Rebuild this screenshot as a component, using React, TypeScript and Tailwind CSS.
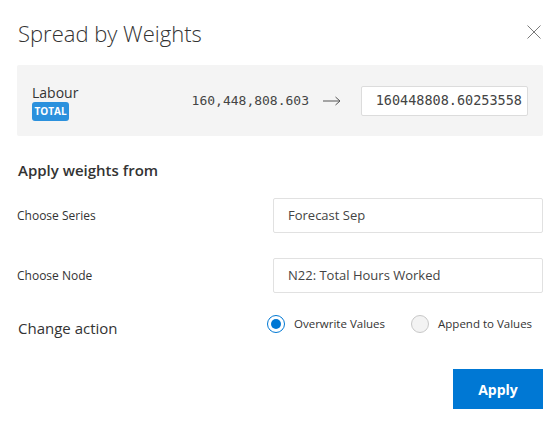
const sans = { fontFamily: '"Open Sans", "Noto Sans", sans-serif' };

const CloseIcon = () => (
  <svg width="14" height="14" viewBox="0 0 14 14" className="text-[#7a7a7a]">
    <path d="M0.5 0.5 L13.5 13.5 M13.5 0.5 L0.5 13.5" stroke="currentColor" strokeWidth="1" fill="none" />
  </svg>
);

const LongArrow = () => (
  <svg width="18" height="10" viewBox="0 0 18 10" className="text-[#555]">
    <path d="M0 5 H17 M12.5 1 L17 5 L12.5 9" stroke="currentColor" strokeWidth="1" fill="none" />
  </svg>
);

const Radio = ({ checked, label }: { checked?: boolean; label: string }) => (
  <label className="flex items-center gap-[9px] whitespace-nowrap text-[11.5px] text-[#333]">
    {checked ? (
      <span className="flex h-[18px] w-[18px] shrink-0 items-center justify-center rounded-full border border-[#0078d4] bg-white">
        <span className="h-[10px] w-[10px] rounded-full bg-[#0078d4]" />
      </span>
    ) : (
      <span className="h-[18px] w-[18px] shrink-0 rounded-full border border-[#c8c8c8] bg-[#f3f3f3]" />
    )}
    {label}
  </label>
);

const Field = ({ label, value }: { label: string; value: string }) => (
  <div className="flex items-center">
    <div className="text-[12px] text-[#333]">{label}</div>
    <div className="ml-auto flex h-[35px] w-[270px] items-center rounded-[2px] border border-[#e1e1e1] bg-white px-[14px] text-[13px] text-[#444]">
      {value}
    </div>
  </div>
);

export default function App() {
  return (
    <div className="h-[425px] w-[560px] bg-white px-[17px]" style={sans}>
      {/* header */}
      <div className="flex h-[65px] items-start justify-between">
        <h1 className="mt-[18px] pl-[1px] text-[22px] font-light leading-[30px] text-[#333]">Spread by Weights</h1>
        <button className="mr-[2px] mt-[25px]">
          <CloseIcon />
        </button>
      </div>

      {/* total panel */}
      <div className="flex h-[71px] items-center rounded-[2px] bg-[#f4f4f4] pl-[15px] pr-[15px]">
        <div className="mt-[4px] flex flex-col items-start">
          <span className="text-[14px] leading-[17px] text-[#333]">Labour</span>
          <span className="mt-[1px] flex h-[19px] w-[37px] items-center justify-center rounded-[3px] bg-[#2b91dd] text-[10px] font-bold text-white">
            TOTAL
          </span>
        </div>
        <div className="ml-auto flex items-center text-[#444]" style={{ fontFamily: '"DejaVu Sans Mono", monospace' }}>
          <span className="text-[13px]">160,448,808.603</span>
          <span className="ml-[14px] mr-[20px] flex">
            <LongArrow />
          </span>
          <div className="flex h-[30px] w-[167px] items-center justify-end rounded-[2px] border border-[#dcdcdc] bg-white pr-[5px] text-[13.5px]">
            160448808.60253558
          </div>
        </div>
      </div>

      {/* weights */}
      <h2 className="mt-[24px] pl-[1px] text-[15px] font-semibold leading-[20px] text-[#333]">Apply weights from</h2>
      <div className="mt-[18px] flex flex-col gap-[25px]">
        <Field label="Choose Series" value="Forecast Sep" />
        <Field label="Choose Node" value="N22: Total Hours Worked" />
      </div>

      {/* action */}
      <div className="mt-[19px] flex items-start">
        <div className="mt-[6px] pl-[1px] text-[15px] font-medium leading-[20px] text-[#333]">Change action</div>
        <div className="ml-auto flex h-[24px] w-[276px] items-center gap-[26px]">
          <Radio checked label="Overwrite Values" />
          <Radio label="Append to Values" />
        </div>
      </div>

      <div className="mt-[31px] flex justify-end">
        <button className="h-[40px] w-[90px] bg-[#0078d4] text-[14px] font-bold text-white">Apply</button>
      </div>
    </div>
  );
}
